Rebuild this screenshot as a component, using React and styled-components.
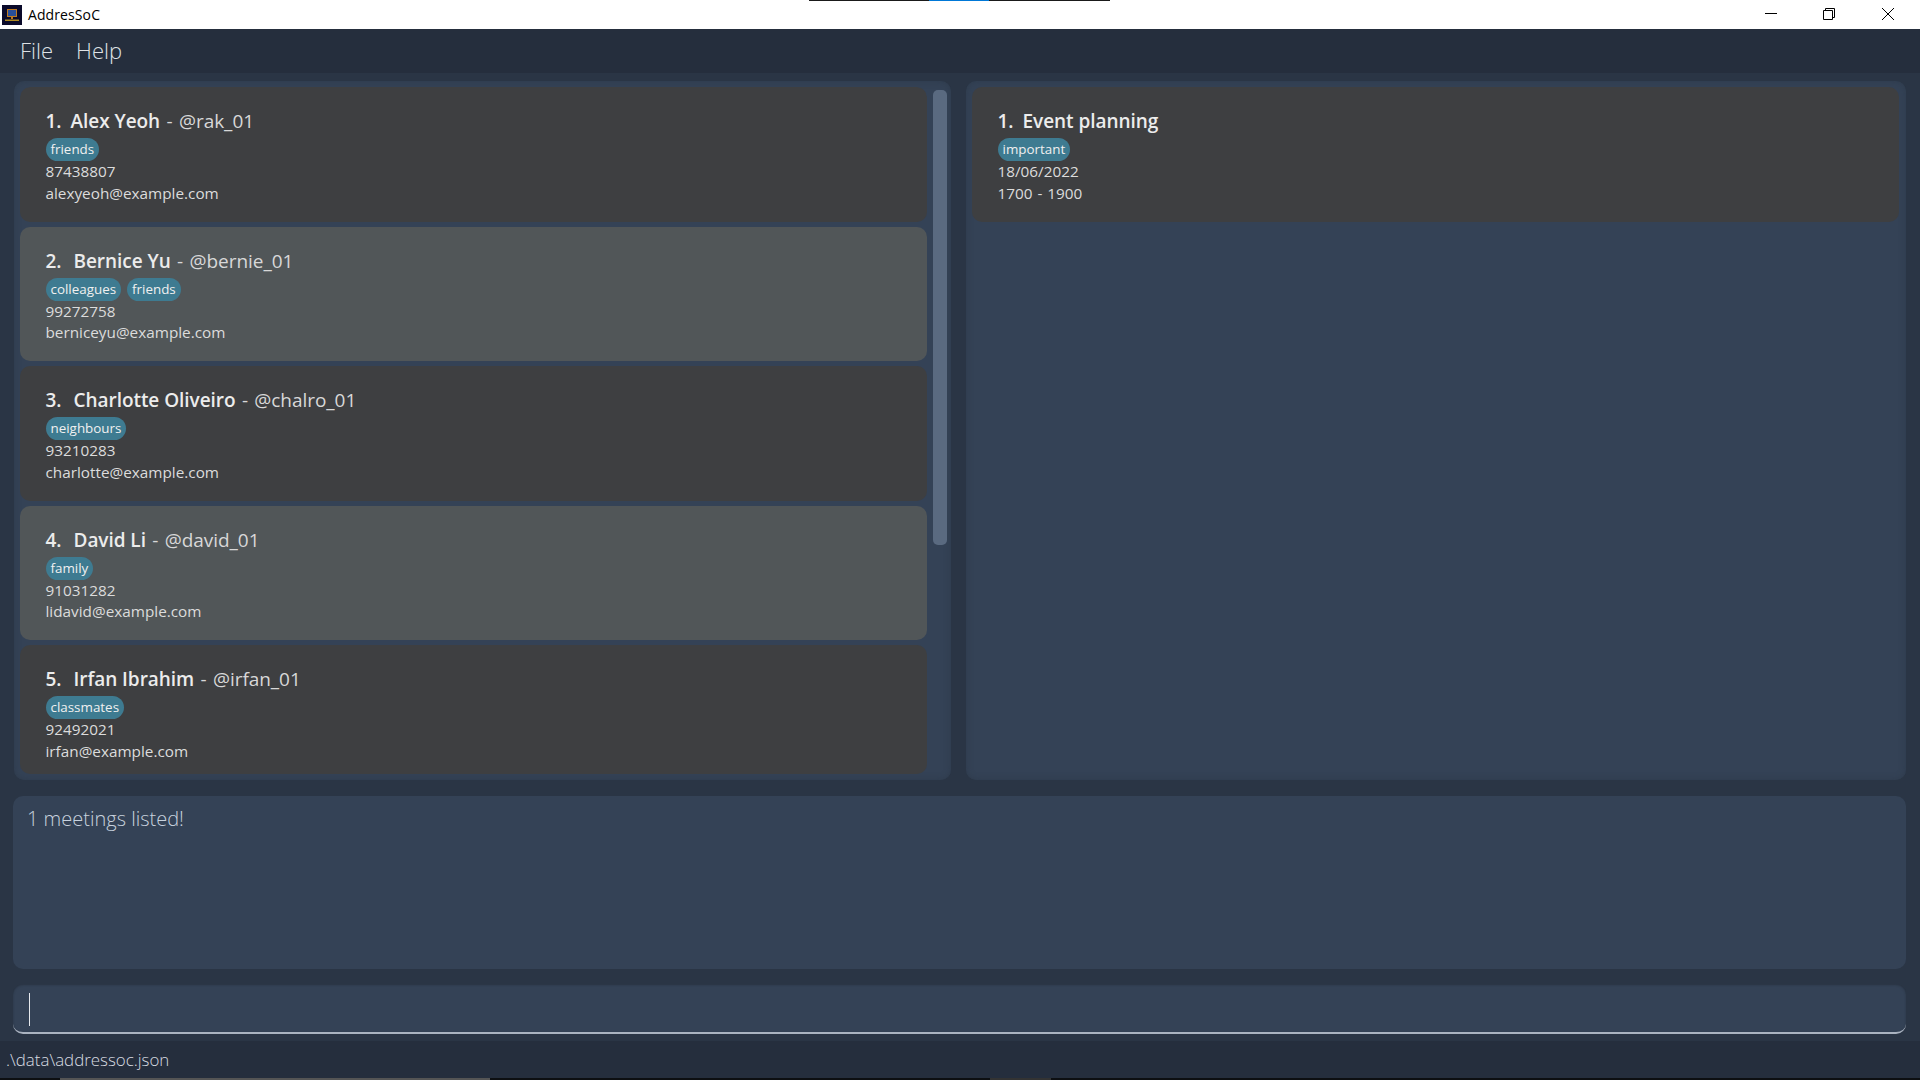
import React from 'react';
import styled, { createGlobalStyle } from 'styled-components';

const Global = createGlobalStyle`
  html, body { margin: 0; padding: 0; height: 100%; background: #fff; }
  * { box-sizing: border-box; }
  #root { height: 100%; }
`;

const Win = styled.div`
  width: 1920px;
  height: 1080px;
  display: flex;
  flex-direction: column;
  overflow: hidden;
  font-family: "Open Sans", "Noto Sans", sans-serif;
  background: #2a3545;
`;

const TitleBar = styled.div`
  height: 29px;
  background: #fff;
  display: flex;
  align-items: center;
  padding: 0 3px 0 2px;
  position: relative;
  color: #000;
`;

const TitleText = styled.span`
  margin-left: 6px;
  font-size: 14px;
  letter-spacing: 0.1px;
  position: relative;
  top: -0.5px;
`;

const Stripe = styled.div`
  position: absolute;
  left: 809px;
  top: 0;
  width: 301px;
  height: 1px;
  background: linear-gradient(to right, #1a1a1a 0 120px, #0078d7 120px 180px, #1a1a1a 180px);
`;

const WinButtons = styled.div`
  margin-left: auto;
  display: flex;
  align-self: flex-start;
`;

const WinButton = styled.div`
  width: 58.5px;
  height: 28px;
  display: flex;
  align-items: center;
  justify-content: center;
`;

const MenuBar = styled.div`
  height: 44px;
  background: #252e3d;
  display: flex;
  align-items: center;
  padding: 0 0 2px 20px;
  gap: 23px;
  font-size: 22px;
  font-weight: 300;
  color: #dfe2e6;
`;

const Body = styled.div`
  flex: 1;
  display: flex;
  flex-direction: column;
  padding: 8px 14px 0 13px;
`;

const Panels = styled.div`
  height: 699px;
  display: flex;
  gap: 15px;
  padding-left: 1px;
`;

const ListPanel = styled.div`
  width: 937px;
  background: #344256;
  border-radius: 10px;
  box-shadow: inset 0 0 6px rgba(42, 53, 69, 0.6);
  padding: 6px 4px 6px 6px;
  display: flex;
`;

const MeetingPanel = styled.div`
  flex: 1;
  background: #344256;
  border-radius: 10px;
  box-shadow: inset 0 0 6px rgba(42, 53, 69, 0.6);
  padding: 6px 7px 6px 6px;
`;

const CardList = styled.div`
  flex: 1;
  display: flex;
  flex-direction: column;
  gap: 5px;
  overflow: hidden;
  border-radius: 10px;
`;

const Card = styled.div`
  flex: none;
  height: 134.6px;
  border-radius: 10px;
  background: ${({ $alt }) => ($alt ? '#515658' : '#3e3f41')};
  padding: 21px 26px 0 25.5px;
  color: #e0e0e0;
`;

const CardTitle = styled.div`
  font-size: 19px;
  line-height: 27px;
  font-weight: 600;
  color: #ececec;
  white-space: pre;
  letter-spacing: -0.05px;
`;

const Index = styled.span`
  display: inline-block;
  width: ${({ $width }) => $width}px;
`;

const Handle = styled.span`
  margin-left: 1.5px;
  font-weight: 500;
  word-spacing: 1.5px;
  color: #d8d8d8;
`;

const Tags = styled.div`
  display: flex;
  gap: 6px;
  margin-top: 3px;
`;

const Tag = styled.span`
  height: 23px;
  padding: 0 5px;
  border-radius: 12px;
  background: #3e7b91;
  color: #f0f0f0;
  font-size: 13.4px;
  line-height: 22px;
`;

const Line = styled.div`
  font-size: 15.3px;
  line-height: 21.7px;
  word-spacing: 1px;
  color: #dcdcdc;
`;

const Scrollbar = styled.div`
  width: 14px;
  margin-left: 6px;
  margin-top: 3px;
  height: 455px;
  background: #5a6a80;
  border-radius: 5px;
`;

const ResultBox = styled.div`
  height: 173px;
  margin-top: 16px;
  background: #344256;
  border-radius: 10px;
  padding: 8px 14px;
  font-size: 20px;
  font-weight: 300;
  line-height: 30px;
  color: #c8d2de;
`;

const CommandBox = styled.div`
  height: 50px;
  margin-top: 15px;
  background: #344256;
  border-radius: 10px;
  border-bottom: 2px solid #aab3c0;
  box-shadow: inset 0 1px 2px rgba(30, 36, 46, 0.5);
  padding: 9px 16px 0;
`;

const Caret = styled.div`
  width: 1px;
  height: 33px;
  background: #e6e9ee;
`;

const StatusBar = styled.div`
  height: 37px;
  margin-top: 7px;
  background: #252e3d;
  display: flex;
  align-items: center;
  padding-left: 6px;
  font-size: 16.9px;
  font-weight: 300;
  color: #d8dce2;
`;

const Taskbar = styled.div`
  height: 2px;
  background: linear-gradient(to right, #0d0f12 0 60px, #555 60px 490px, #0d0f12 490px 990px, #333 990px 1051px, #0d0f12 1051px);
`;

const people = [
  { name: 'Alex Yeoh', handle: '@rak_01', tags: ['friends'], phone: '87438807', email: 'alexyeoh@example.com' },
  { name: 'Bernice Yu', handle: '@bernie_01', tags: ['colleagues', 'friends'], phone: '99272758', email: 'berniceyu@example.com' },
  { name: 'Charlotte Oliveiro', handle: '@chalro_01', tags: ['neighbours'], phone: '93210283', email: 'charlotte@example.com' },
  { name: 'David Li', handle: '@david_01', tags: ['family'], phone: '91031282', email: 'lidavid@example.com' },
  { name: 'Irfan Ibrahim', handle: '@irfan_01', tags: ['classmates'], phone: '92492021', email: 'irfan@example.com' },
];

const AppIcon = () => (
  <svg width="20" height="20" viewBox="0 0 20 20">
    <rect width="20" height="20" fill="#0a0a2a" />
    <rect x="5.5" y="4.5" width="9" height="7" fill="#2a4f9a" stroke="#c07a20" strokeWidth="1" />
    <rect x="9" y="12" width="2" height="2" fill="#c07a20" />
    <rect x="3" y="14.5" width="14" height="1.5" fill="#b08a20" />
  </svg>
);

export default function App() {
  return (
    <Win>
      <Global />
      <TitleBar>
        <AppIcon />
        <TitleText>AddresSoC</TitleText>
        <Stripe />
        <WinButtons>
          <WinButton>
            <svg width="12" height="12" viewBox="0 0 12 12"><path d="M0 5.5h12" stroke="#000" fill="none" /></svg>
          </WinButton>
          <WinButton>
            <svg width="12" height="12" viewBox="0 0 12 12"><path d="M.5 2.5h9v9h-9zM2.5 2.5V.5h9v9h-2" stroke="#000" fill="none" /></svg>
          </WinButton>
          <WinButton>
            <svg width="12" height="12" viewBox="0 0 12 12"><path d="M0 0l12 12M12 0L0 12" stroke="#000" fill="none" /></svg>
          </WinButton>
        </WinButtons>
      </TitleBar>
      <MenuBar>
        <span>File</span>
        <span>Help</span>
      </MenuBar>
      <Body>
        <Panels>
          <ListPanel>
            <CardList>
              {people.map((p, i) => (
                <Card key={p.name} $alt={i % 2 === 1}>
                  <CardTitle><Index $width={i === 0 ? 25 : 28}>{i + 1}.</Index>{p.name} <Handle>- {p.handle}</Handle></CardTitle>
                  <Tags>{p.tags.map((t) => <Tag key={t}>{t}</Tag>)}</Tags>
                  <Line>{p.phone}</Line>
                  <Line>{p.email}</Line>
                </Card>
              ))}
            </CardList>
            <Scrollbar />
          </ListPanel>
          <MeetingPanel>
            <Card>
              <CardTitle><Index $width={25}>1.</Index>Event planning</CardTitle>
              <Tags><Tag>important</Tag></Tags>
              <Line>18/06/2022</Line>
              <Line>1700 - 1900</Line>
            </Card>
          </MeetingPanel>
        </Panels>
        <ResultBox>1 meetings listed!</ResultBox>
        <CommandBox><Caret /></CommandBox>
      </Body>
      <StatusBar>.\data\addressoc.json</StatusBar>
      <Taskbar />
    </Win>
  );
}
